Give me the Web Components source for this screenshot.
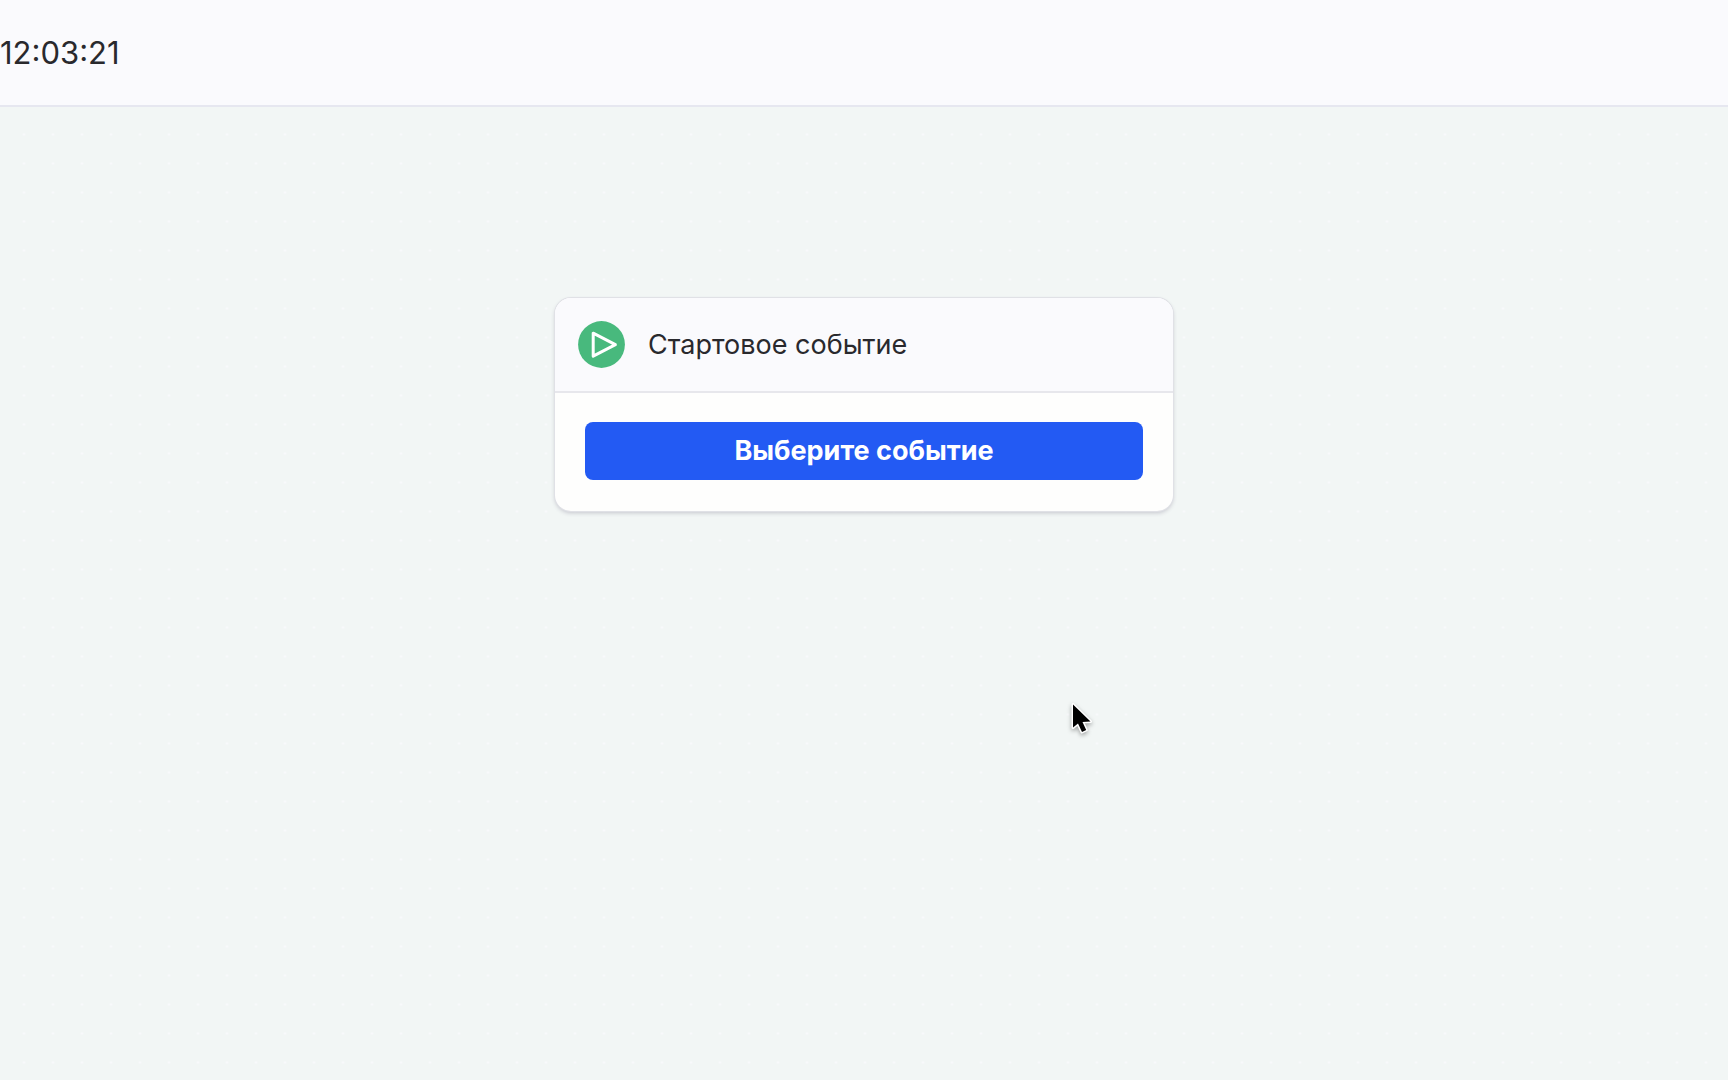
<!DOCTYPE html>
<html lang="ru">
<head>
<meta charset="utf-8">
<title>Стартовое событие</title>
<style>
    body {
        margin: 0;
        font-family: Inter, "Liberation Sans", sans-serif;
        color: #29292d;
    }
</style>
</head>
<body>

<flow-editor>
    <flow-header slot="header"><time>12:03:21</time></flow-header>
    <flow-node>
        <play-icon slot="icon"></play-icon>
        <span slot="title">Стартовое событие</span>
        <flow-button>Выберите событие</flow-button>
    </flow-node>
    <flow-cursor slot="overlay"></flow-cursor>
</flow-editor>

<script>
(function() {
    // every element has its own markup and styles, cloned into an open shadow root
    function define(name, html) {
        const template = document.createElement('template');
        template.innerHTML = html;

        customElements.define(name, class extends HTMLElement {
            constructor() {
                super();

                this.attachShadow({mode: 'open'});
                this.shadowRoot.appendChild(template.content.cloneNode(true));
            }
        });
    }

    /*
     *     Editor: header on top, dotted canvas below
     */
    define('flow-editor', `

<style>
    :host {
        display: flex;
        flex-direction: column;
        min-height: 100vh;
    }

    main {
        position: relative;
        flex: 1;
        display: flex;
        justify-content: center;
        align-items: flex-start;
        padding-top: 191px;
        overflow: hidden;
        background: #f2f6f5 radial-gradient(circle, #fafafd, transparent 2px) calc(50% + 1px) 13px / 29px 29px;
    }
</style>

<slot name="header"></slot>
<main>
    <slot></slot>
    <slot name="overlay"></slot>
</main>

`);

    define('flow-header', `

<style>
    :host {
        box-sizing: border-box;
        display: flex;
        align-items: center;
        height: 107px;
        border-bottom: 2px solid #e6e7f0;
        background: #fafafd;
        font-size: 31px;
        line-height: 40px;
    }
</style>

<header><slot></slot></header>

`);

    /*
     *     Node card
     */
    define('flow-node', `

<style>
    :host {
        box-sizing: border-box;
        display: block;
        width: 618px;
        max-width: 100%;
        overflow: hidden;
        border-radius: 16px;
        background: #fefefd;
        box-shadow: 0 0 0 1px #e0e1e6, 0 2px 4px #c4c5cc;
    }

    header {
        display: flex;
        align-items: center;
        gap: 23px;
        padding: 23px;
        border-bottom: 2px solid #e7e7ec;
        background: #fafafd;
    }

    h2 {
        margin: 0;
        font-size: 27px;
        font-weight: 400;
        line-height: 40px;
    }

    .body {
        padding: 29px 30px 31px;
    }
</style>

<header>
    <slot name="icon"></slot>
    <h2><slot name="title"></slot></h2>
</header>
<div class="body"><slot></slot></div>

`);

    define('flow-button', `

<style>
    :host {
        display: block;
    }

    button {
        display: block;
        width: 100%;
        height: 58px;
        padding: 0;
        border: 0;
        border-radius: 8px;
        background: #235af3;
        color: #fff;
        font: inherit;
        font-size: 27px;
        font-weight: 700;
        line-height: 40px;
    }
</style>

<button type="button"><slot></slot></button>

`);

    define('play-icon', `

<style>
    :host {
        display: block;
        width: 47px;
        height: 47px;
    }

    svg {
        display: block;
    }
</style>

<svg width="47" height="47" viewBox="0 0 47 47" aria-hidden="true">
    <circle cx="23.5" cy="23.5" r="23.4" fill="#48b97d"/>
    <path d="M15.2 12.2v23L37.4 23.7z" fill="none" stroke="#fff" stroke-width="3" stroke-linejoin="round"/>
</svg>

`);

    // pointer floating over the canvas
    define('flow-cursor', `

<style>
    :host {
        position: absolute;
        left: 1066px;
        top: 592px;
        width: 36px;
        height: 44px;
        pointer-events: none;
    }

    svg {
        display: block;
        filter: drop-shadow(0 2px 2px #0005);
    }
</style>

<svg width="36" height="44" viewBox="0 0 36 44" aria-hidden="true">
    <path d="M7 5.5v23l5-4 4 8.5 4.2-2-3.7-8 8-.4z" fill="#000" stroke="#fff" stroke-width="3" stroke-linejoin="round" paint-order="stroke"/>
</svg>

`);
})();
</script>
</body>
</html>
